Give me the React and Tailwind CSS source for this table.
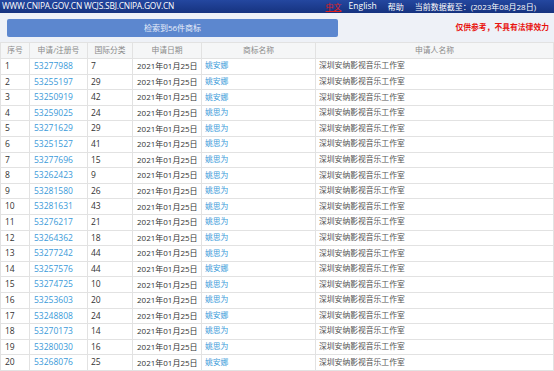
import React from "react";

const rows = [
  ["53277988", "7", "姚安娜"],
  ["53255197", "29", "姚安娜"],
  ["53250919", "42", "姚安娜"],
  ["53259025", "24", "姚思为"],
  ["53271629", "29", "姚思为"],
  ["53251527", "41", "姚思为"],
  ["53277696", "15", "姚思为"],
  ["53262423", "9", "姚思为"],
  ["53281580", "26", "姚思为"],
  ["53281631", "43", "姚思为"],
  ["53276217", "21", "姚思为"],
  ["53264362", "18", "姚思为"],
  ["53277242", "44", "姚思为"],
  ["53257576", "44", "姚安娜"],
  ["53274725", "10", "姚思为"],
  ["53253603", "20", "姚思为"],
  ["53248808", "24", "姚安娜"],
  ["53270173", "14", "姚思为"],
  ["53280030", "16", "姚思为"],
  ["53268076", "25", "姚安娜"],
];

const font = { fontFamily: '"Open Sans", "Noto Sans CJK SC", sans-serif' };

export default function App() {
  return (
    <div className="w-[554px] h-[371px] overflow-hidden bg-white" style={font}>
      {/* top bar */}
      <div className="h-[13px] bg-gradient-to-b from-[#2447a0] to-[#16337f] flex items-center text-white text-[8px] leading-none">
        <span className="pl-[2px] text-[8.4px] tracking-[-0.2px]">WWW.CNIPA.GOV.CN WCJS.SBJ.CNIPA.GOV.CN</span>
        <div className="ml-auto flex items-center pr-[18px]">
          <span className="text-[#e0201c] underline mr-[7px]">中文</span>
          <span className="mr-[11px] text-[8.5px]">English</span>
          <span className="mr-[11px]">帮助</span>
          <span>当前数据截至：(2023年08月28日)</span>
        </div>
      </div>

      {/* search result bar */}
      <div className="h-[29px] bg-[#eef1f7] flex items-center pl-[7px] pr-[5px]">
        <div className="w-[331px] h-[18px] bg-[#5c87cf] rounded-[2px] flex items-center justify-center text-[8px] text-[#e8eefa]">
          检索到56件商标
        </div>
        <span className="ml-auto text-[7.8px] font-bold text-[#e8130f]">仅供参考，不具有法律效力</span>
      </div>

      {/* table */}
      <table className="w-full border-collapse table-fixed text-[8px] leading-none">
        <colgroup>
          <col className="w-[29px]" />
          <col className="w-[58px]" />
          <col className="w-[45px]" />
          <col className="w-[69px]" />
          <col className="w-[114px]" />
          <col />
        </colgroup>
        <thead>
          <tr className="h-[16px] bg-[#f5f6f7] text-[#8a8a8a] text-[7.8px]">
            <th className="font-normal border border-[#e2e2e2]">序号</th>
            <th className="font-normal border border-[#e2e2e2]">申请/注册号</th>
            <th className="font-normal border border-[#e2e2e2]">国际分类</th>
            <th className="font-normal border border-[#e2e2e2]">申请日期</th>
            <th className="font-normal border border-[#e2e2e2]">商标名称</th>
            <th className="font-normal border border-[#e2e2e2]">申请人名称</th>
          </tr>
        </thead>
        <tbody>
          {rows.map((r, i) => (
            <tr key={r[0]} className="h-[15.6px] text-[#333]">
              <td className="border border-[#e2e2e2] pl-[4px] text-[8.5px]">{i + 1}</td>
              <td className="border border-[#e2e2e2] pl-[4px] text-[#3a9ad9] text-[8.5px]">{r[0]}</td>
              <td className="border border-[#e2e2e2] pl-[3px] text-[8.5px]">{r[1]}</td>
              <td className="border border-[#e2e2e2] pl-[4px] whitespace-nowrap">2021年01月25日</td>
              <td className="border border-[#e2e2e2] pl-[3px] text-[#3a9ad9] text-[7.8px]">{r[2]}</td>
              <td className="border border-[#e2e2e2] pl-[3px] text-[7.8px] text-[#555]">深圳安纳影视音乐工作室</td>
            </tr>
          ))}
        </tbody>
      </table>
    </div>
  );
}
